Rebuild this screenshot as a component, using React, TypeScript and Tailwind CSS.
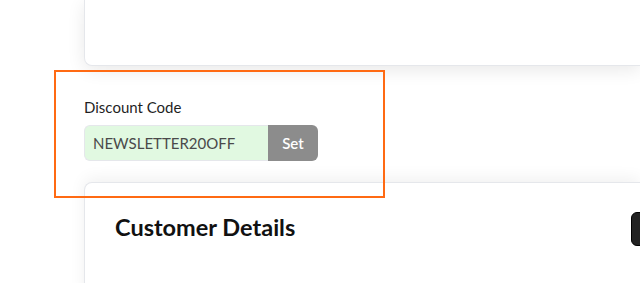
export default function App() {
  return (
    <div className="relative h-[283px] w-[640px] overflow-hidden bg-white font-['Lato',sans-serif]">
      {/* top card */}
      <div className="ml-[84px] h-[66px] rounded-bl-lg border-b border-l border-gray-200 bg-white shadow-[0_4px_18px_rgba(0,0,0,0.09)]" />

      {/* discount code */}
      <div className="pl-[84px] pt-[31px]">
        <label className="block text-[15px] leading-5 text-[#1f1f1f]">Discount Code</label>
        <div className="mt-[8px] flex h-[36px] w-[234px]">
          <input
            type="text"
            readOnly
            value="NEWSLETTER20OFF"
            className="h-full w-[184px] rounded-l-md border border-r-0 border-gray-200 bg-[#e1f9e1] px-[8px] text-[15px] text-[#4a4a4a] outline-none"
          />
          <button className="h-full w-[50px] rounded-r-md bg-[#8c8c8c] text-[15px] font-semibold text-white">
            Set
          </button>
        </div>
      </div>

      {/* customer details card */}
      <div className="ml-[84px] mt-[21px] h-[120px] rounded-tl-lg border-l border-t border-gray-200 bg-white shadow-[0_-4px_16px_rgba(0,0,0,0.06)]">
        <div className="flex items-start justify-between pl-[30px] pt-[29px]">
          <h2 className="text-[23.5px] font-bold leading-[30px] text-[#111]">Customer Details</h2>
          <div className="-mr-[40px] h-[34px] w-[49px] rounded-md border border-black bg-[#222]" />
        </div>
      </div>

      {/* highlight */}
      <div className="pointer-events-none absolute left-[54px] top-[70px] h-[128px] w-[331px] border-2 border-[#ff6a13]" />
    </div>
  );
}
